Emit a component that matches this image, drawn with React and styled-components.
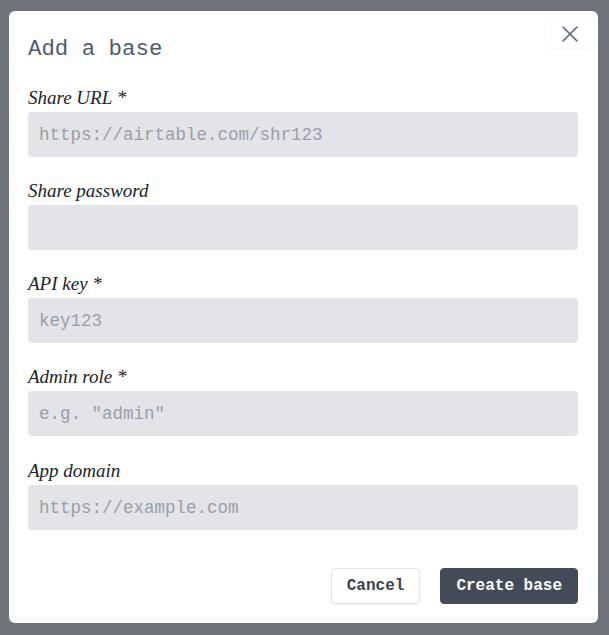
import React from 'react';
import styled, { createGlobalStyle } from 'styled-components';

const GlobalStyle = createGlobalStyle`
  html, body {
    margin: 0;
    padding: 0;
    background: #6f737b;
  }
  * { box-sizing: border-box; }
`;

const Overlay = styled.div`
  width: 609px;
  height: 635px;
  background: #6f737b;
  display: flex;
  align-items: flex-start;
  justify-content: flex-start;
  padding: 11px 0 0 9px;
`;

const Modal = styled.div`
  position: relative;
  width: 589px;
  background: #ffffff;
  border-radius: 6px;
  padding: 24px 20px 19px 19px;
  display: flex;
  flex-direction: column;
`;

const Title = styled.h2`
  margin: 0 0 23px;
  font-family: "Liberation Mono", monospace;
  font-weight: 400;
  font-size: 22.4px;
  line-height: 28px;
  color: #4f5b70;
`;

const CloseButton = styled.button`
  position: absolute;
  top: 9px;
  right: 5px;
  width: 47px;
  height: 28px;
  border: none;
  border-radius: 5px;
  background: #ffffff;
  box-shadow: 0 0 3px rgba(0, 0, 0, 0.06);
  display: flex;
  align-items: center;
  justify-content: center;
  padding: 0;
  cursor: pointer;
`;

const Fields = styled.div`
  display: flex;
  flex-direction: column;
  gap: 22px;
`;

const Field = styled.label`
  display: flex;
  flex-direction: column;
  gap: 2px;
  &:last-child {
    margin-top: 1px;
  }
`;

const Label = styled.span`
  font-family: "Liberation Serif", serif;
  font-style: italic;
  font-size: 19px;
  line-height: 24px;
  color: #1a1f2b;
`;

const Input = styled.input`
  width: 550px;
  height: 45px;
  border: none;
  border-radius: 4px;
  background: #e2e4e8;
  padding: 0 11px;
  font-family: "Liberation Mono", monospace;
  font-size: 17.5px;
  color: #374151;
  outline: none;
  &::placeholder {
    color: #9a9fa8;
  }
`;

const Footer = styled.div`
  display: flex;
  justify-content: flex-end;
  gap: 20px;
  margin-top: 38px;
`;

const Button = styled.button`
  height: 36px;
  padding: 0 15px;
  border-radius: 4px;
  font-family: "Liberation Mono", monospace;
  font-weight: 700;
  font-size: 16px;
  cursor: pointer;
  border: 1px solid ${p => (p.$primary ? '#434b58' : '#e3e5e9')};
  background: ${p => (p.$primary ? '#434b58' : '#ffffff')};
  color: ${p => (p.$primary ? '#ffffff' : '#3a4250')};
  box-shadow: ${p => (p.$primary ? 'none' : '0 1px 2px rgba(0,0,0,0.05)')};
`;

const fields = [
  { label: 'Share URL *', placeholder: 'https://airtable.com/shr123' },
  { label: 'Share password', placeholder: '', type: 'password' },
  { label: 'API key *', placeholder: 'key123' },
  { label: 'Admin role *', placeholder: 'e.g. "admin"' },
  { label: 'App domain', placeholder: 'https://example.com' },
];

const App = () => (
  <>
    <GlobalStyle />
    <Overlay>
      <Modal>
        <CloseButton aria-label="Close">
          <svg width="18" height="18" viewBox="0 0 18 18" fill="none" stroke="#5b6678" strokeWidth="1.6" strokeLinecap="round">
            <path d="M2 2 L16 16 M16 2 L2 16" />
          </svg>
        </CloseButton>
        <Title>Add a base</Title>
        <Fields>
          {fields.map(f => (
            <Field key={f.label}>
              <Label>{f.label}</Label>
              <Input type={f.type || 'text'} placeholder={f.placeholder} />
            </Field>
          ))}
        </Fields>
        <Footer>
          <Button>Cancel</Button>
          <Button $primary>Create base</Button>
        </Footer>
      </Modal>
    </Overlay>
  </>
);

export default App;
